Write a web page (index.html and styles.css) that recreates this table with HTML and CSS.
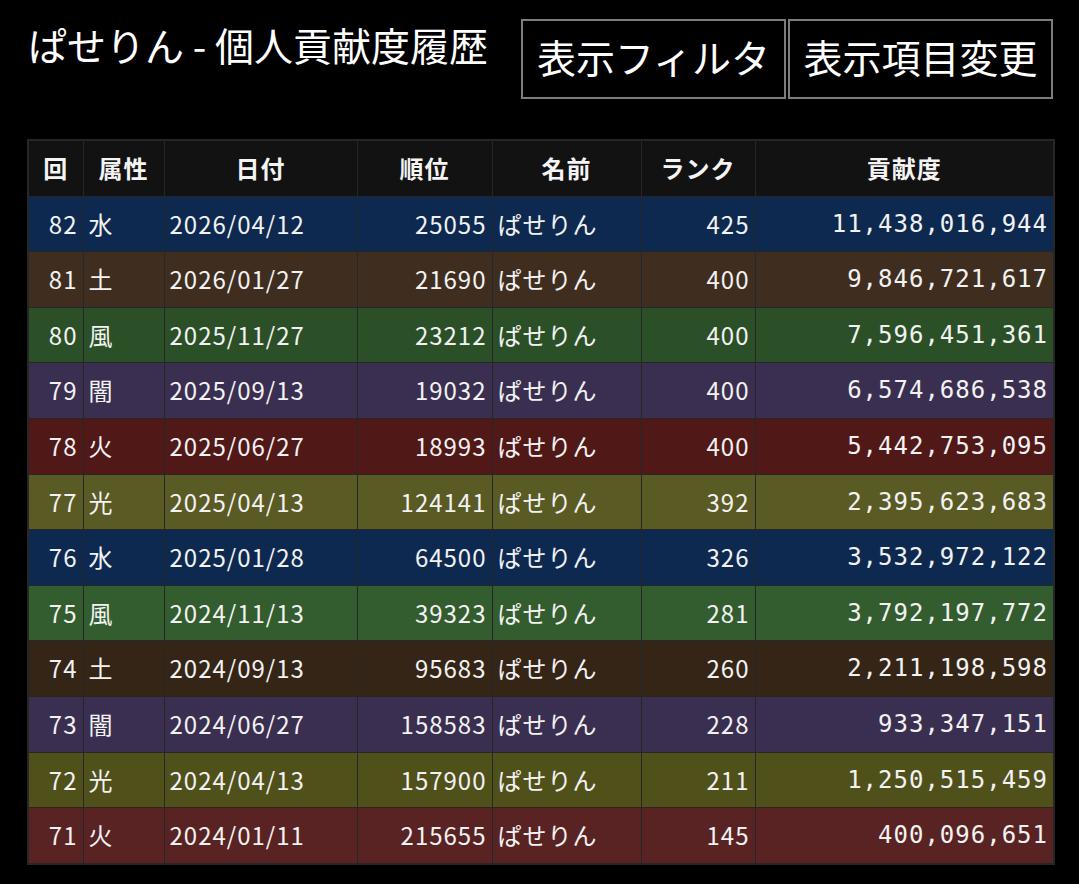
FILE: index.html
```html
<!DOCTYPE html>
<html lang="ja">
<head>
<meta charset="utf-8">
<title>ぱせりん - 個人貢献度履歴</title>
<link rel="stylesheet" href="styles.css">
</head>
<body>
<div class="page">
  <header class="top">
    <h1 class="title">ぱせりん - 個人貢献度履歴</h1>
    <div class="actions">
      <button class="btn">表示フィルタ</button>
      <button class="btn">表示項目変更</button>
    </div>
  </header>
  <table class="hist">
    <colgroup>
      <col class="c-no"><col class="c-attr"><col class="c-date"><col class="c-rank"><col class="c-name"><col class="c-lv"><col class="c-pt">
    </colgroup>
    <thead>
      <tr><th>回</th><th>属性</th><th>日付</th><th>順位</th><th>名前</th><th>ランク</th><th>貢献度</th></tr>
    </thead>
    <tbody>
      <tr class="r-water1"><td class="num">82</td><td>水</td><td>2026/04/12</td><td class="num">25055</td><td>ぱせりん</td><td class="num">425</td><td class="num mono">11,438,016,944</td></tr>
      <tr class="r-earth1"><td class="num">81</td><td>土</td><td>2026/01/27</td><td class="num">21690</td><td>ぱせりん</td><td class="num">400</td><td class="num mono">9,846,721,617</td></tr>
      <tr class="r-wind1"><td class="num">80</td><td>風</td><td>2025/11/27</td><td class="num">23212</td><td>ぱせりん</td><td class="num">400</td><td class="num mono">7,596,451,361</td></tr>
      <tr class="r-dark"><td class="num">79</td><td>闇</td><td>2025/09/13</td><td class="num">19032</td><td>ぱせりん</td><td class="num">400</td><td class="num mono">6,574,686,538</td></tr>
      <tr class="r-fire1"><td class="num">78</td><td>火</td><td>2025/06/27</td><td class="num">18993</td><td>ぱせりん</td><td class="num">400</td><td class="num mono">5,442,753,095</td></tr>
      <tr class="r-light1"><td class="num">77</td><td>光</td><td>2025/04/13</td><td class="num">124141</td><td>ぱせりん</td><td class="num">392</td><td class="num mono">2,395,623,683</td></tr>
      <tr class="r-water1"><td class="num">76</td><td>水</td><td>2025/01/28</td><td class="num">64500</td><td>ぱせりん</td><td class="num">326</td><td class="num mono">3,532,972,122</td></tr>
      <tr class="r-wind2"><td class="num">75</td><td>風</td><td>2024/11/13</td><td class="num">39323</td><td>ぱせりん</td><td class="num">281</td><td class="num mono">3,792,197,772</td></tr>
      <tr class="r-earth2"><td class="num">74</td><td>土</td><td>2024/09/13</td><td class="num">95683</td><td>ぱせりん</td><td class="num">260</td><td class="num mono">2,211,198,598</td></tr>
      <tr class="r-dark"><td class="num">73</td><td>闇</td><td>2024/06/27</td><td class="num">158583</td><td>ぱせりん</td><td class="num">228</td><td class="num mono">933,347,151</td></tr>
      <tr class="r-light2"><td class="num">72</td><td>光</td><td>2024/04/13</td><td class="num">157900</td><td>ぱせりん</td><td class="num">211</td><td class="num mono">1,250,515,459</td></tr>
      <tr class="r-fire2"><td class="num">71</td><td>火</td><td>2024/01/11</td><td class="num">215655</td><td>ぱせりん</td><td class="num">145</td><td class="num mono">400,096,651</td></tr>
    </tbody>
  </table>
</div>
</body>
</html>
```

FILE: styles.css
```css
html, body {
  margin: 0;
  padding: 0;
  background: #000;
}

body {
  font-family: "Noto Sans CJK JP", "Noto Sans", sans-serif;
  color: #f2f2f2;
}

.page {
  padding: 19px 26px 0 27px;
}

.top {
  display: flex;
  justify-content: space-between;
  align-items: flex-start;
}

.title {
  margin: -3px 0 0 1px;
  font-size: 39px;
  font-weight: 400;
  line-height: 56px;
  color: #fff;
}

.actions {
  display: flex;
  gap: 2px;
}

.btn {
  box-sizing: border-box;
  width: 265px;
  height: 80px;
  padding: 0 0 5px;
  margin: 0;
  background: #000;
  color: #fff;
  border: 2px solid #7c7c7c;
  font-family: "Noto Sans CJK JP", sans-serif;
  font-size: 39px;
  font-weight: 400;
  line-height: 1;
}

.hist {
  margin-top: 40px;
  width: 1026px;
  table-layout: fixed;
  border-collapse: collapse;
  font-size: 24px;
  letter-spacing: 1px;
  border: 2px solid #262626;
}

.c-no { width: 55px; }
.c-attr { width: 81px; }
.c-date { width: 193px; }
.c-rank { width: 135px; }
.c-name { width: 149px; }
.c-lv { width: 114px; }
.c-pt { width: 299px; }

.hist th,
.hist td {
  border: 1px solid #262626;
  padding: 10px 5px;
  line-height: 34.6px;
  white-space: nowrap;
  overflow: hidden;
}

.hist th {
  background: #121212;
  font-weight: 700;
  text-align: center;
  color: #f4f4f4;
}

.hist td {
  text-align: left;
}

.hist td.num {
  text-align: right;
}

.hist td.mono {
  font-family: "DejaVu Sans Mono", monospace;
  letter-spacing: 1px;
}

.r-water1 { background: #0e2950; }
.r-earth1 { background: #3f2e1f; }
.r-wind1 { background: #2b5027; }
.r-wind2 { background: #335d2e; }
.r-earth2 { background: #352517; }
.r-dark { background: #3a2f50; }
.r-fire1 { background: #511818; }
.r-fire2 { background: #5a2323; }
.r-light1 { background: #5a5a24; }
.r-light2 { background: #50501b; }
```
